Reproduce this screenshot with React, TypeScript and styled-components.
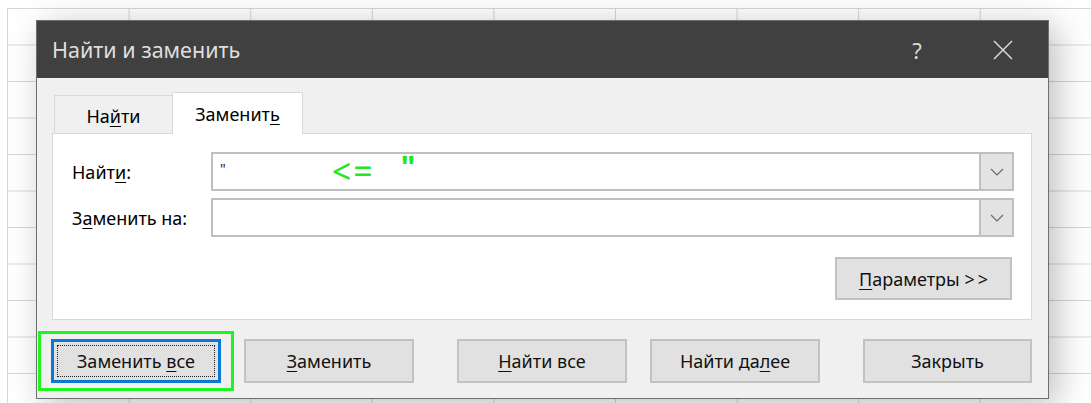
import React from "react";
import styled, { createGlobalStyle } from "styled-components";

const GlobalStyle = createGlobalStyle`
  html, body {
    margin: 0;
    padding: 0;
    background: #fff;
  }
  body {
    font-family: "Noto Sans", "Open Sans", sans-serif;
    color: #000;
  }
`;

/* spreadsheet behind the dialog */
const Sheet = styled.div`
  width: 1091px;
  height: 403px;
  overflow: hidden;
  box-sizing: border-box;
  padding: 8px 0 0 7px;
  background: #fff;
`;

const Cells = styled.div`
  height: 100%;
  box-sizing: border-box;
  padding: 12px 0 0 29px;
  background-image: linear-gradient(to right, #d6d6d6 1px, transparent 1px),
    linear-gradient(to bottom, #d6d6d6 1px, transparent 1px);
  background-size: 121.6px 36.5px;
`;

const Dialog = styled.div`
  width: 1013px;
  box-sizing: border-box;
  border: 1px solid #6e6e6e;
  background: #f0f0f0;
  box-shadow: 8px 6px 32px rgba(0, 0, 0, 0.26);
  display: flex;
  flex-direction: column;
`;

const TitleBar = styled.div`
  height: 57px;
  background: #404040;
  display: flex;
  align-items: center;
  padding: 0 15px;
  gap: 26px;
`;

const Title = styled.div`
  flex: 1;
  color: #dedede;
  font-size: 21.5px;
`;

const TitleButton = styled.div`
  width: 60px;
  height: 40px;
  display: flex;
  align-items: center;
  justify-content: center;
  color: #d8d8d8;
  font-size: 22px;
`;

const Body = styled.div`
  display: flex;
  flex-direction: column;
  padding: 14px 16px 15px 15px;
`;

const TabStrip = styled.div`
  height: 41px;
  display: flex;
  align-items: flex-end;
  padding-left: 2px;
`;

const Tab = styled.div<{ $active?: boolean }>`
  box-sizing: border-box;
  width: ${(p) => (p.$active ? 131 : 118)}px;
  height: ${(p) => (p.$active ? 42 : 38)}px;
  margin-bottom: ${(p) => (p.$active ? -1 : 0)}px;
  position: relative;
  z-index: ${(p) => (p.$active ? 1 : 0)};
  background: ${(p) => (p.$active ? "#fff" : "transparent")};
  border: 1px solid #d9d9d9;
  border-bottom: none;
  border-right: ${(p) => (p.$active ? "1px solid #d9d9d9" : "none")};
  display: flex;
  align-items: center;
  justify-content: center;
  padding-top: ${(p) => (p.$active ? 0 : 2)}px;
  font-size: 18px;
`;

const Panel = styled.div`
  background: #fff;
  border: 1px solid #d9d9d9;
  padding: 18px 17px 19px 19px;
  display: flex;
  flex-direction: column;
`;

const FieldRow = styled.div<{ $gap?: number }>`
  display: grid;
  grid-template-columns: 139px 1fr;
  align-items: center;
  margin-top: ${(p) => p.$gap ?? 0}px;
`;

const Label = styled.div`
  font-size: 18px;
`;

const Combo = styled.div`
  height: 39px;
  box-sizing: border-box;
  border: 2px solid #bfbfbf;
  background: #fff;
  display: flex;
`;

const ComboText = styled.div`
  flex: 1;
  display: flex;
  align-items: center;
  padding-left: 7px;
  white-space: pre;
`;

const Quote = styled.span`
  font-size: 14px;
  color: #222;
  margin-top: -6px;
`;

const Mark = styled.span<{ $left: number; $size: number; $rise?: number; $bold?: boolean }>`
  color: #22e622;
  font-size: ${(p) => p.$size}px;
  font-weight: ${(p) => (p.$bold ? 700 : 400)};
  line-height: 1;
  letter-spacing: 2px;
  margin-left: ${(p) => p.$left}px;
  margin-top: ${(p) => -(p.$rise ?? 0)}px;
`;

const DropButton = styled.div`
  width: 31px;
  background: #e3e3e3;
  border-left: 2px solid #bfbfbf;
  display: flex;
  align-items: center;
  justify-content: center;
`;

const PanelActions = styled.div`
  display: flex;
  justify-content: flex-end;
  margin-top: 20px;
  padding-right: 2px;
`;

const Button = styled.div<{ $width: number; $offset?: number; $height?: number }>`
  box-sizing: border-box;
  width: ${(p) => p.$width}px;
  height: ${(p) => p.$height ?? 44}px;
  margin-left: ${(p) => p.$offset ?? 0}px;
  background: #e1e1e1;
  border: 2px solid #c2c2c2;
  display: flex;
  align-items: center;
  justify-content: center;
  font-size: 18px;
  color: #111;
  white-space: pre;
`;

const DefaultButton = styled(Button)`
  border: 3px solid #0a78d4;
  outline: 1px dotted #222;
  outline-offset: -7px;
`;

const Highlight = styled.div`
  border: 3px solid #1ef51e;
  padding: 5px 10px;
  margin: -8px -13px;
  display: flex;
`;

const Footer = styled.div`
  display: flex;
  align-items: center;
  margin: 19px 0 0 -1px;
`;

const U = styled.span`
  text-decoration: underline;
  text-decoration-thickness: 1px;
  text-underline-offset: 3px;
`;

const Chevron = () => (
  <svg width="14" height="8" viewBox="0 0 14 8">
    <path d="M1 1 L7 7 L13 1" fill="none" stroke="#6a6a6a" strokeWidth="1.2" />
  </svg>
);

const CloseIcon = () => (
  <svg width="20" height="20" viewBox="0 0 20 20">
    <path d="M1 1 L19 19 M19 1 L1 19" stroke="#e0e0e0" strokeWidth="1.4" />
  </svg>
);

const App: React.FC = () => {
  return (
    <>
      <GlobalStyle />
      <Sheet>
        <Cells>
          <Dialog>
            <TitleBar>
              <Title>Найти и заменить</Title>
              <TitleButton>?</TitleButton>
              <TitleButton>
                <CloseIcon />
              </TitleButton>
            </TitleBar>
            <Body>
              <TabStrip>
                <Tab>
                  <span>
                    На<U>й</U>ти
                  </span>
                </Tab>
                <Tab $active>
                  <span>
                    Заменит<U>ь</U>
                  </span>
                </Tab>
              </TabStrip>
              <Panel>
                <FieldRow>
                  <Label>
                    Найт<U>и</U>:
                  </Label>
                  <Combo>
                    <ComboText>
                      <Quote>"</Quote>
                      <Mark $left={106} $size={34} $rise={2}>
                        &lt;=
                      </Mark>
                      <Mark $left={26} $size={30} $rise={10} $bold>
                        "
                      </Mark>
                    </ComboText>
                    <DropButton>
                      <Chevron />
                    </DropButton>
                  </Combo>
                </FieldRow>
                <FieldRow $gap={7}>
                  <Label>
                    З<U>а</U>менить на:
                  </Label>
                  <Combo>
                    <ComboText />
                    <DropButton>
                      <Chevron />
                    </DropButton>
                  </Combo>
                </FieldRow>
                <PanelActions>
                  <Button $width={177} $height={43}>
                    <span>
                      <U>П</U>араметры &gt;&thinsp;&gt;
                    </span>
                  </Button>
                </PanelActions>
              </Panel>
              <Footer>
                <Highlight>
                  <DefaultButton $width={170}>
                    <span>
                      Заменить <U>в</U>се
                    </span>
                  </DefaultButton>
                </Highlight>
                <Button $width={170} $offset={23}>
                  <span>
                    <U>З</U>аменить
                  </span>
                </Button>
                <Button $width={170} $offset={43}>
                  <span>
                    <U>Н</U>айти все
                  </span>
                </Button>
                <Button $width={170} $offset={23}>
                  <span>
                    Найти да<U>л</U>ее
                  </span>
                </Button>
                <Button $width={169} $offset={43}>
                  <span>Закрыть</span>
                </Button>
              </Footer>
            </Body>
          </Dialog>
        </Cells>
      </Sheet>
    </>
  );
};

export default App;
